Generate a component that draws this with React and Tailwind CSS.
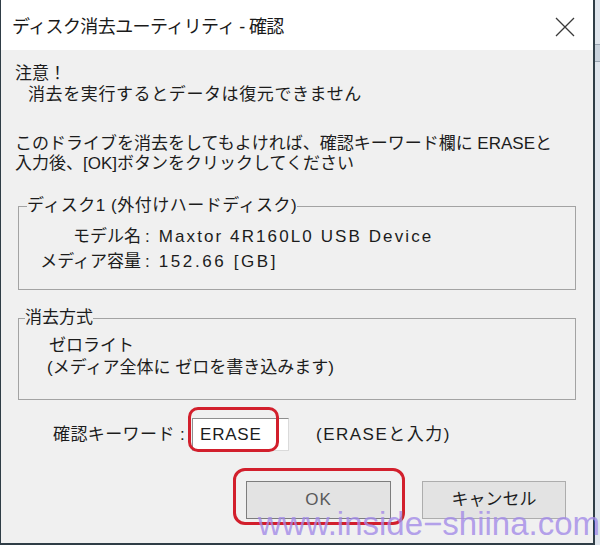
import React from 'react';

const font = "font-['Liberation_Sans','Noto_Sans_CJK_JP',sans-serif]";

function CloseIcon() {
  return (
    <svg width="24" height="24" viewBox="0 0 24 24" className="block">
      <path d="M3 3 L21 21 M21 3 L3 21" stroke="#3a3a3a" strokeWidth="1.3" fill="none" />
    </svg>
  );
}

export default function App() {
  return (
    <div className={`relative w-[600px] h-[545px] overflow-hidden flex bg-[#dfe5ec] text-[#1c1c1c] ${font}`}>
      {/* window */}
      <div className="w-[595px] h-[545px] flex flex-col border-l border-r-2 border-b-2 border-[#2f3d46]">
        {/* title bar */}
        <div className="h-[50px] bg-white flex items-center justify-between pl-[11px] pr-[16px] pt-[4px]">
          <span className="text-[18px] tracking-[-0.6px] text-[#1a1a1a]">ディスク消去ユーティリティ - 確認</span>
          <CloseIcon />
        </div>

        {/* body */}
        <div className="flex-1 bg-[#f0f0f0] px-[17px] pt-[13px] text-[17px]">
          <div className="-ml-[3px] leading-[21px]">
            <p>注意！</p>
            <p className="pl-[13px] tracking-[0.6px]">消去を実行するとデータは復元できません</p>
          </div>
          <div className="-ml-[3px] mt-[29px] leading-[20px]">
            <p>このドライブを消去をしてもよければ、確認キーワード欄に ERASEと</p>
            <p>入力後、[OK]ボタンをクリックしてください</p>
          </div>

          {/* disk group */}
          <fieldset className="mt-[22px] border border-[#a3a3a3] pb-[17px] pt-0">
            <legend className="ml-[8px] leading-[20px] tracking-[0.5px]">ディスク1 (外付けハードディスク)</legend>
            <div className="mt-[11px] flex flex-col gap-[5px] leading-[20px]">
              <div className="flex">
                <span className="w-[122px] text-right">モデル名</span>
                <span className="ml-[4px] mr-[9px]">:</span>
                <span className="tracking-[2.1px]">Maxtor 4R160L0 USB Device</span>
              </div>
              <div className="flex">
                <span className="w-[122px] text-right">メディア容量</span>
                <span className="ml-[4px] mr-[9px]">:</span>
                <span className="tracking-[2.6px]">152.66 [GB]</span>
              </div>
            </div>
          </fieldset>

          {/* erase method group */}
          <fieldset className="mt-[18px] border border-[#a3a3a3] pb-[20px] pt-0">
            <legend className="ml-[6px] leading-[20px]">消去方式</legend>
            <div className="mt-[7px] pl-[30px] leading-[22px]">
              <p>ゼロライト</p>
              <p className="-ml-[2px]">(メディア全体に ゼロを書き込みます)</p>
            </div>
          </fieldset>

          {/* keyword row */}
          <div className="mt-[18px] flex items-center h-[33px]">
            <span className="ml-[35px] w-[139px] tracking-[0.4px]">確認キーワード :</span>
            <div className="w-[97px] h-[33px] bg-white border border-[#8e8e8e] border-r-[#dadada] border-b-[#dadada] flex items-center pl-[7px] tracking-[0.8px]">
              ERASE
            </div>
            <span className="ml-[27px] tracking-[1.5px]">(ERASEと入力)</span>
          </div>

          {/* buttons */}
          <div className="mt-[30px] flex justify-end gap-[31px] pr-[10px]">
            <button className="w-[145px] h-[38px] bg-[#e3e3e3] border border-[#7d7d7d] text-[#5a5a5a] tracking-[1px]">OK</button>
            <button className="w-[144px] h-[38px] bg-[#e3e3e3] border border-[#adadad]">キャンセル</button>
          </div>
        </div>
      </div>
      <div className="flex-1 flex flex-col">
        <div className="h-[44px]" />
        <div className="h-[18px] border-t border-b border-[#9aa6b2] bg-[#c9d2dc]" />
      </div>

      {/* red highlight marks */}
      <div className="absolute left-[188px] top-[407px] w-[91px] h-[45px] border-[3px] border-[#d21f2c] rounded-[10px]" />
      <div className="absolute left-[233px] top-[468px] w-[172px] h-[57px] border-[3px] border-[#d21f2c] rounded-[12px]" />

      {/* watermark */}
      <div className="absolute left-[258px] top-[507px] text-[33px] leading-none text-[#a28ae8]/80 font-['Liberation_Sans',sans-serif] whitespace-nowrap">
        www.inside−shiina.com
      </div>
    </div>
  );
}
